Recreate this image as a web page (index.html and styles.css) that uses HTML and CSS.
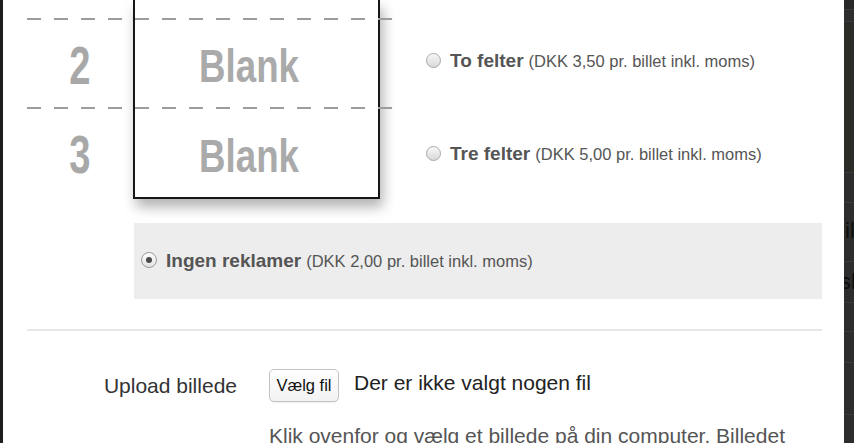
FILE: index.html
```html
<!DOCTYPE html>
<html lang="da">
<head>
<meta charset="utf-8">
<title>Reklamer på billetten</title>
<link rel="stylesheet" href="styles.css">
</head>
<body>
<div class="screen">
  <div class="edge-left"></div>
  <main class="modal">
    <section class="ad-options">
      <div class="ticket">
        <div class="nums">
          <div class="cell top"></div>
          <div class="cell dashed"><span class="num">2</span></div>
          <div class="cell dashed"><span class="num">3</span></div>
        </div>
        <div class="card">
          <div class="cell top"></div>
          <div class="cell"><span class="blank">Blank</span></div>
          <div class="cell last"><span class="blank">Blank</span></div>
        </div>
      </div>
      <div class="choices">
        <label class="choice"><span class="radio"></span><b>To felter</b> <small>(DKK 3,50 pr. billet inkl. moms)</small></label>
        <label class="choice"><span class="radio"></span><b>Tre felter</b> <small>(DKK 5,00 pr. billet inkl. moms)</small></label>
      </div>
    </section>
    <label class="choice none-choice"><span class="radio checked"></span><b>Ingen reklamer</b> <small>(DKK 2,00 pr. billet inkl. moms)</small></label>
    <hr class="divider">
    <div class="upload">
      <span class="upload-label">Upload billede</span>
      <div class="file-field">
        <span class="file-btn">Vælg fil</span>
        <span class="file-name">Der er ikke valgt nogen fil</span>
      </div>
      <span></span>
      <p class="help">Klik ovenfor og vælg et billede på din computer. Billedet</p>
    </div>
  </main>
  <div class="edge-right">
    <div class="strip s1"></div>
    <div class="strip s2"></div>
    <div class="strip s3"></div>
    <div class="strip s4"></div>
    <div class="strip s5"><span class="bg-text">il</span></div>
    <div class="strip s6"><span class="bg-text cut">sl</span></div>
    <div class="strip s7"></div>
    <div class="strip s8"></div>
    <div class="strip s9"></div>
    <div class="strip s10"></div>
  </div>
</div>
</body>
</html>
```

FILE: styles.css
```css
* { box-sizing: border-box; }
html, body { margin: 0; padding: 0; }
body {
  font-family: "Liberation Sans", Arial, Helvetica, sans-serif;
  background: #2b2b2b;
}
.screen {
  display: flex;
  width: 854px;
  height: 443px;
  overflow: hidden;
}
.edge-left { width: 3px; flex: none; background: #1e1e1e; }
.modal {
  width: 841px;
  flex: none;
  background: #fff;
  padding: 0 22px 0 24px;
}

/* ticket illustration */
.ad-options { display: flex; align-items: flex-start; }
.ticket { display: flex; width: 373px; flex: none; }
.nums { width: 106px; display: flex; flex-direction: column; }
.card {
  width: 247px;
  display: flex;
  flex-direction: column;
  background: #fff;
  border-left: 2px solid #161616;
  border-right: 2px solid #161616;
  border-bottom: 2px solid #161616;
  box-shadow: 3px 8px 12px rgba(0,0,0,0.3);
}
.cell {
  height: 89px;
  display: flex;
  align-items: center;
  justify-content: center;
  padding-top: 6px;
  position: relative;
}
.card .cell { padding-right: 16px; }
.cell.top { height: 18px; padding: 0; }
.card .cell.last { height: 90px; }
.nums .cell.dashed::before {
  content: "";
  position: absolute;
  top: 0;
  left: 0;
  width: 373px;
  height: 2px;
  z-index: 1;
  background: repeating-linear-gradient(to right, #9c9c9c 0 14px, transparent 14px 27px);
}
.num {
  display: inline-block;
  font-size: 53px;
  font-weight: bold;
  line-height: 1;
  color: #a8a8a8;
  transform: scaleX(0.72);
}
.blank {
  display: inline-block;
  font-size: 47px;
  font-weight: bold;
  line-height: 1;
  color: #aaaaaa;
  transform: scaleX(0.78);
}

/* choices */
.choices {
  display: flex;
  flex-direction: column;
  gap: 67px;
  padding-top: 48px;
  margin-left: 26px;
}
.choice {
  display: flex;
  align-items: center;
  height: 26px;
  color: #555;
  white-space: nowrap;
}
.choice b { font-size: 19px; font-weight: bold; color: #555; }
.choice small { font-size: 16.5px; color: #555; margin-left: 5px; }
.radio {
  width: 15px;
  height: 15px;
  border-radius: 50%;
  border: 1px solid #a9a9a9;
  background: linear-gradient(#f7f7f7, #d9d9d9);
  margin-right: 9px;
  margin-top: -2px;
  flex: none;
  display: flex;
  align-items: center;
  justify-content: center;
}
.radio.checked {
  width: 16px;
  height: 16px;
  border-color: #9a9a9a;
  background: linear-gradient(#fdfdfd, #e2e2e2);
}
.radio.checked::after {
  content: "";
  width: 6px;
  height: 6px;
  border-radius: 50%;
  background: #4a4a4a;
}
.none-choice {
  margin: 24px 0 0 107px;
  height: 76px;
  background: #ededed;
  padding-left: 7px;
}
.none-choice .radio { margin-right: 9px; }

.divider {
  margin: 30px 0 0 0;
  border: 0;
  height: 2px;
  background: #e7e7e7;
}

/* upload */
.upload {
  display: grid;
  grid-template-columns: 210px 1fr;
  column-gap: 32px;
  row-gap: 22px;
  margin-top: 38px;
}
.upload-label {
  text-align: right;
  font-size: 21px;
  line-height: 24px;
  color: #333;
  margin-top: 5px;
}
.file-field { display: flex; align-items: flex-start; gap: 15px; }
.file-btn {
  width: 70px;
  height: 33px;
  border: 1px solid #c3c3c3;
  border-radius: 5px;
  background: linear-gradient(#ffffff, #f2f2f2);
  font-size: 16.5px;
  color: #111;
  display: flex;
  align-items: center;
  justify-content: center;
  box-shadow: 0 1px 1px rgba(0,0,0,0.06);
}
.file-name {
  font-size: 21px;
  line-height: 24px;
  color: #222;
  margin-top: 2px;
}
.help {
  margin: 0;
  font-size: 21px;
  line-height: 24px;
  color: #555;
  white-space: nowrap;
}

/* dimmed page behind the modal */
.edge-right {
  width: 10px;
  flex: none;
  display: flex;
  flex-direction: column;
  background: #2d2d2d;
  overflow: hidden;
}
.strip { border-bottom: 1px solid #3b3b3b; flex: none; overflow: hidden; white-space: nowrap; }
.s1 { height: 10px; background: #282828; }
.s2 { height: 12px; background: #2e2e2e; }
.s3 { height: 151px; background: #2b2b27; }
.s4 { height: 30px; }
.s5 { height: 59px; padding-top: 16px; }
.s6 { height: 41px; padding-top: 8px; }
.s7 { height: 29px; }
.s8 { height: 31px; }
.s9 { height: 52px; }
.s10 { flex: 1; border-bottom: 0; }
.bg-text {
  display: block;
  font-size: 22px;
  line-height: 24px;
  color: #0d0d0d;
  margin-left: 1px;
}
.bg-text.cut { margin-left: -4px; }
```
